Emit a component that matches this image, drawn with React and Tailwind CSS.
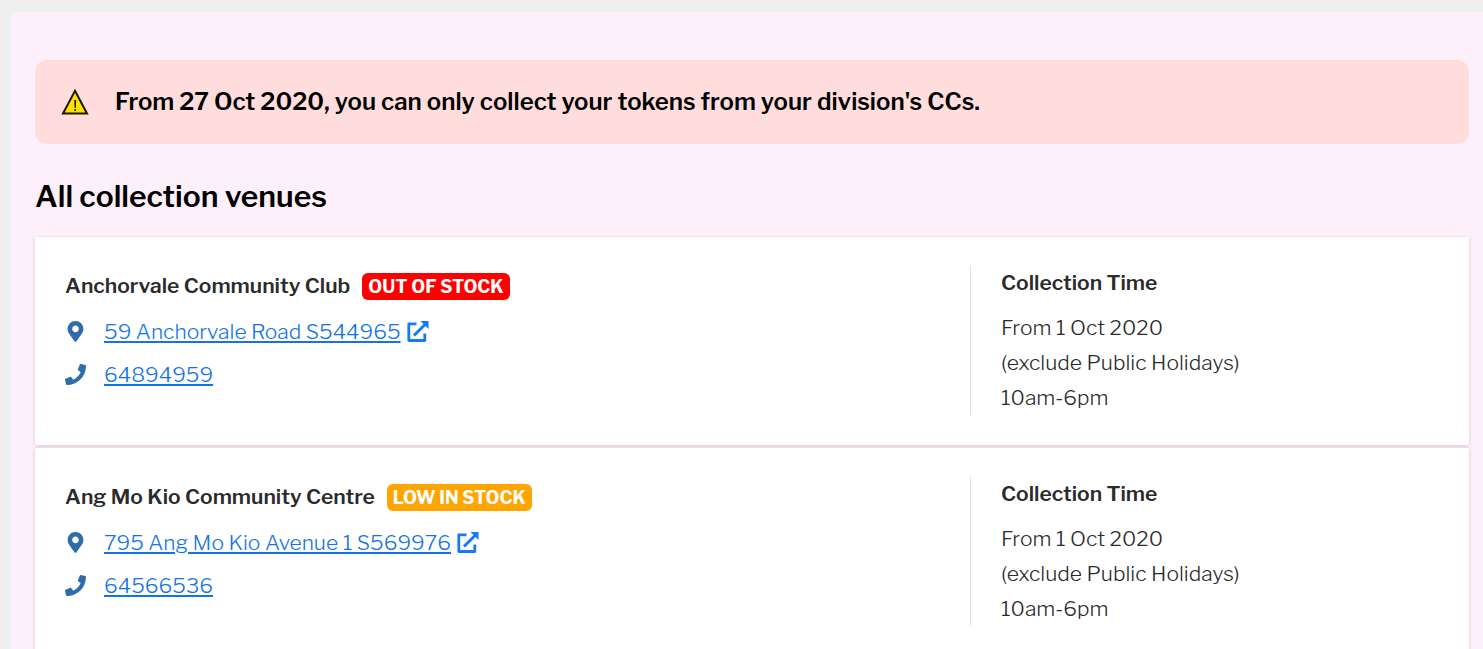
import React from 'react';
import { FaMapMarkerAlt, FaPhone } from 'react-icons/fa';

const venues = [
    {
        id: 1,
        name: 'Anchorvale Community Club',
        status: 'OUT OF STOCK',
        address: '59 Anchorvale Road S544965',
        phone: '64894959',
    },
    {
        id: 2,
        name: 'Ang Mo Kio Community Centre',
        status: 'LOW IN STOCK',
        address: '795 Ang Mo Kio Avenue 1 S569976',
        phone: '64566536',
    },
];

const statusColors = {
    'OUT OF STOCK': 'bg-[#ff0000]',
    'LOW IN STOCK': 'bg-[#ffa500]',
};

function WarningIcon() {
    return (
        <svg viewBox="0 0 28 28" className="h-7 w-7 shrink-0" aria-hidden="true">
            <path d="M14 2.8 L26 25.5 H2 Z" fill="#ffe000" stroke="#1c1a10" strokeWidth="2" />
            <path d="M13.2 12 H15.2 L14.8 20 H13.6 Z" fill="#1c1a10" />
            <circle cx="14.2" cy="22" r="1" fill="#1c1a10" />
        </svg>
    );
}

function ExternalIcon() {
    return (
        <svg viewBox="0 0 22 22" className="h-[22px] w-[22px]" fill="none" stroke="#147bf5" aria-hidden="true">
            <path d="M9.5 2.8 H1.8 V19.5 H17.8 V12.5" strokeWidth="2.8" strokeLinejoin="round" />
            <path d="M7 14.5 L18.5 3" strokeWidth="3" />
            <path d="M13.5 0 H21.5 V8 Z" fill="#147bf5" stroke="none" />
        </svg>
    );
}

function VenueCard({ venue }) {
    return (
        <article className="grid grid-cols-[2fr_1fr] bg-white pb-[30px] pr-[30px] pt-[29px] text-[21px] text-[#2b2b2b] shadow-[0_1px_4px_rgba(60,40,50,0.2)]">
            <div className="border-r border-[#e2e2e2] pl-[30px]">
                <div className="flex items-center gap-3 pt-[6px]">
                    <h3 className="font-semibold leading-7">{venue.name}</h3>
                    <span className={`rounded-md px-[6px] text-[18px] font-bold leading-[27px] text-white ${statusColors[venue.status]}`}>
                        {venue.status}
                    </span>
                </div>
                <div className="mt-[14px] flex h-[35px] items-center gap-[18px]">
                    <FaMapMarkerAlt className="h-[21px] w-[21px] text-[#2f6cae]" />
                    <a href="#map" className="flex items-center gap-[6px] text-[#1473e6]">
                        <span className="font-[350] underline decoration-2 underline-offset-2">{venue.address}</span>
                        <ExternalIcon />
                    </a>
                </div>
                <div className="mt-2 flex h-[35px] items-center gap-[18px]">
                    <FaPhone className="h-[21px] w-[21px] text-[#2f6cae]" />
                    <a href={`tel:${venue.phone}`} className="font-[350] text-[#1473e6] underline decoration-2 underline-offset-2">
                        {venue.phone}
                    </a>
                </div>
            </div>

            <div className="pl-[30px]">
                <h4 className="mb-[10px] font-semibold leading-[34px]">Collection Time</h4>
                <p className="font-[350] leading-[35px]">From 1 Oct 2020</p>
                <p className="font-[350] leading-[35px]">(exclude Public Holidays)</p>
                <p className="font-[350] leading-[35px]">10am-6pm</p>
            </div>
        </article>
    );
}

export default function App() {
    return (
        <div className="h-screen overflow-hidden bg-[#efefef] pl-[11px] pt-3 font-['Libre_Franklin','Inter',sans-serif]">
            <main className="min-h-full bg-[#fef0fa] pl-6 pr-[14px] pt-12">
                <div role="alert" className="flex h-[84px] items-center gap-[26px] rounded-xl bg-[#ffdddd] px-[26px]">
                    <WarningIcon />
                    <p className="text-[24px] font-semibold text-black">
                        From 27 Oct 2020, you can only collect your tokens from your division&apos;s CCs.
                    </p>
                </div>

                <h2 className="mb-5 mt-8 text-[30px] font-semibold leading-[41px] text-black">All collection venues</h2>

                <div className="flex flex-col gap-[3px]">
                    {venues.map((venue) => (
                        <VenueCard key={venue.id} venue={venue} />
                    ))}
                </div>
            </main>
        </div>
    );
}
